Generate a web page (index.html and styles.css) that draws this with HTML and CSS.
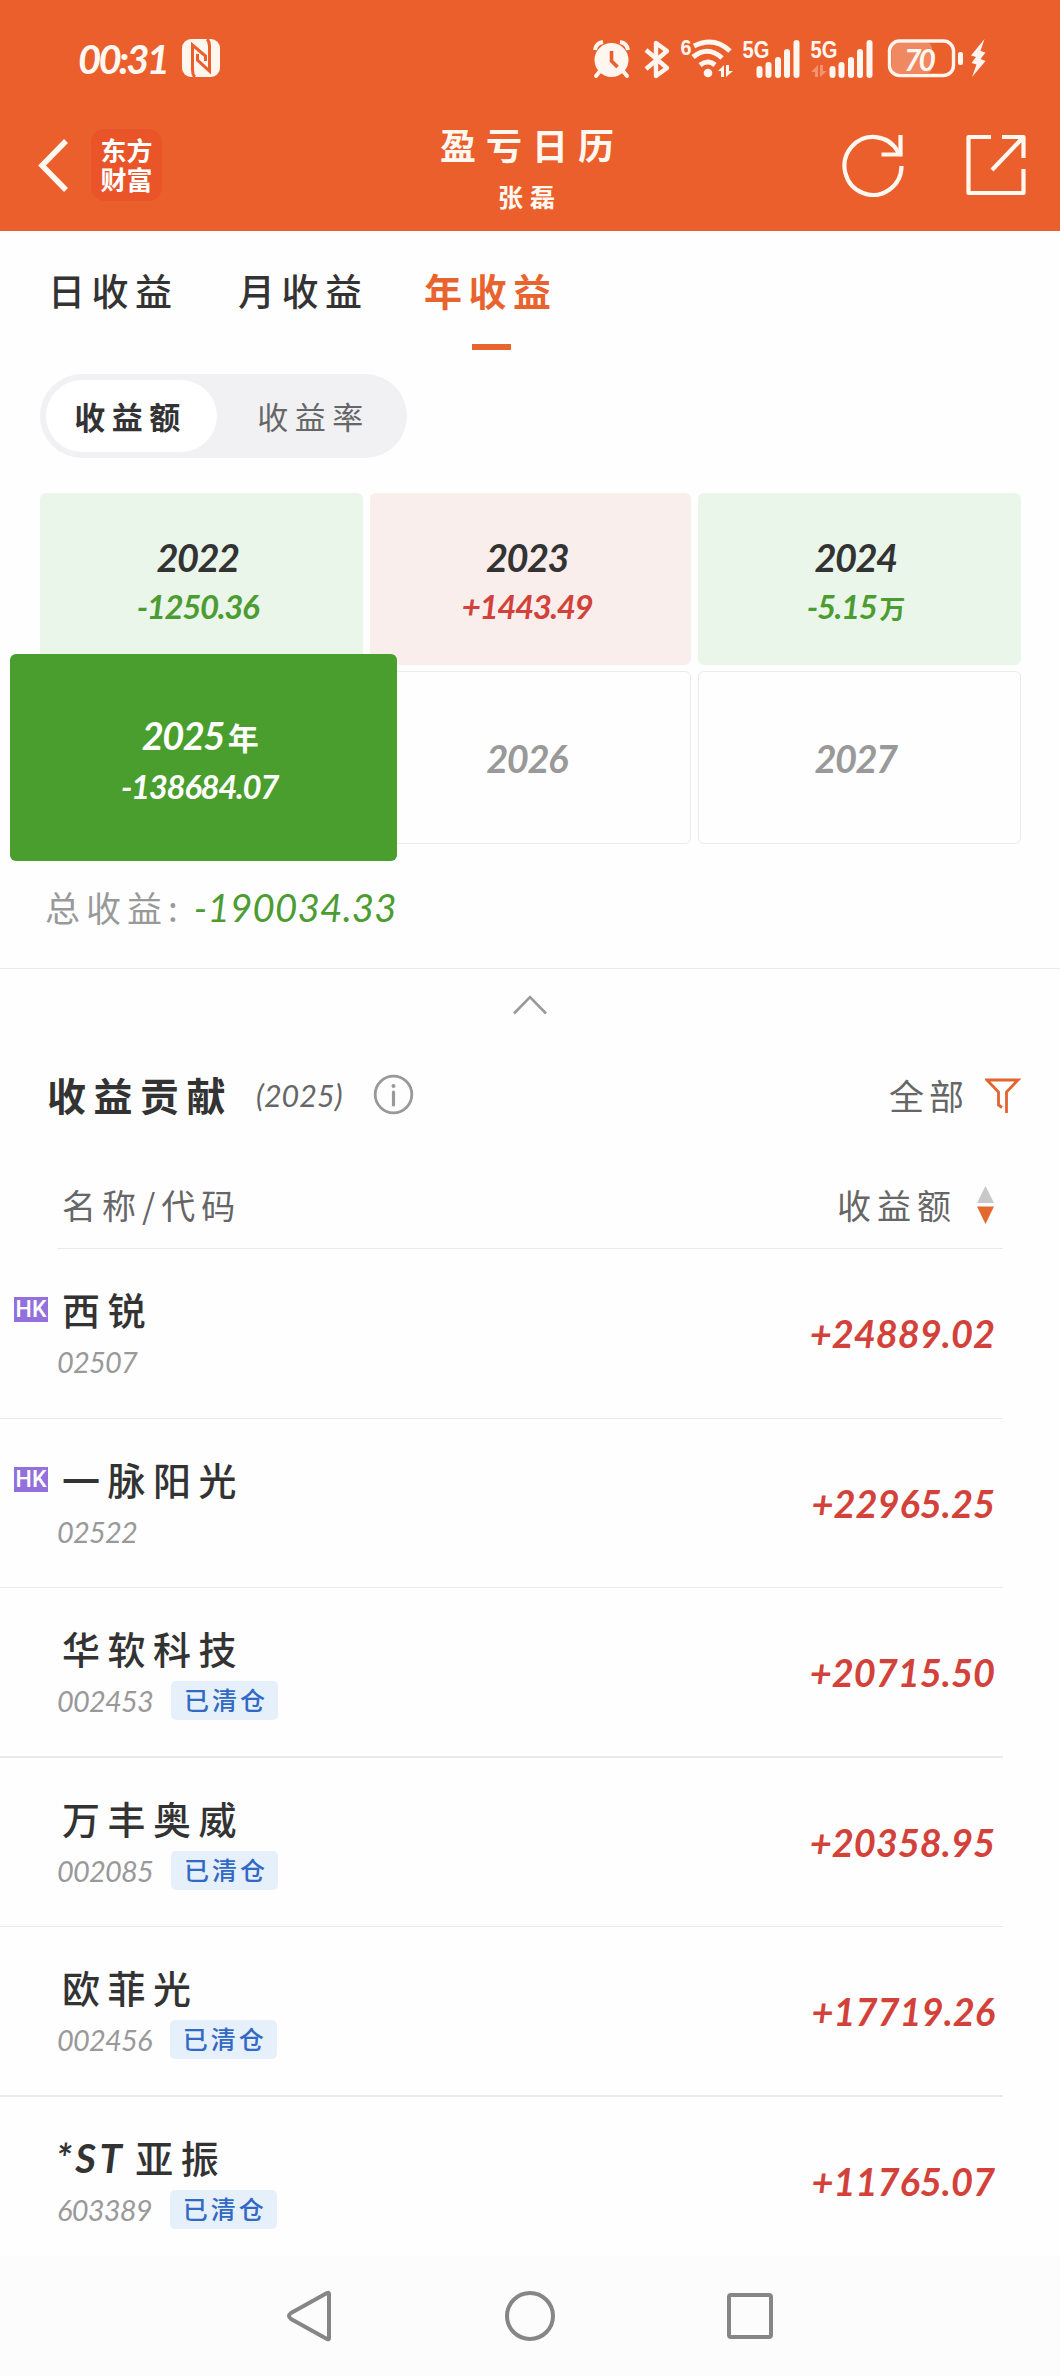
FILE: index.html
```html
<!DOCTYPE html>
<html lang="zh-CN">
<head>
<meta charset="utf-8">
<title>盈亏日历</title>
<link rel="stylesheet" href="styles.css">
</head>
<body>
<header class="top">
  <div class="status">
    <span class="num clock">00:31</span>
    <svg class="nfc" width="38" height="38" viewBox="0 0 38 38"><rect width="38" height="38" rx="9" fill="#fff6f0"/><path d="M13 38Q10.500 36 10.500 31V6L23.500 17V22" fill="none" stroke="#eb5f2d" stroke-width="3"/><path d="M25 0Q27.500 2 27.500 7V32L15.500 21V15" fill="none" stroke="#eb5f2d" stroke-width="3"/></svg>
    <svg class="sys" width="396" height="44" viewBox="592 35 396 44" fill="#fff6f0">
      <circle cx="611.5" cy="59" r="17"/><path d="M595 49q1-7 8-8M628 49q-1-7-8-8" fill="none" stroke="#fff6f0" stroke-width="4"/><path d="M600 70l-4 5M623 70l4 5" stroke="#fff6f0" stroke-width="4" stroke-linecap="round"/><path d="M611.500 50v10l6 6" fill="none" stroke="#eb5f2d" stroke-width="3.600"/>
      <path d="M646 49l21 18-11 8V42l11 8-21 18" fill="none" stroke="#fff6f0" stroke-width="4.400" stroke-linejoin="round"/>
      <text class="tiny" x="680.500" y="54" font-size="22" textLength="11" lengthAdjust="spacingAndGlyphs">6</text>
      <g fill="none" stroke="#fff6f0" stroke-width="5"><path d="M694 45q20-10 36 5"/><path d="M693 56q15-12 29 1"/><path d="M700 64q8-6 15 0"/></g><circle cx="708" cy="72" r="4.300"/>
      <path d="M718 70l6-6v12h-3v-6zM726 64v12l7-6h-4v-6z"/>
      <text class="tiny" x="742.500" y="57" font-size="24.500" textLength="27" lengthAdjust="spacingAndGlyphs">5G</text>
      <g class="bars"><path d="M759.500 68v6M768.500 64v10M778 59v15M787 51v23M796.500 42v32"/><path d="M832.500 68v6M841.500 64v10M851 59v15M860 51v23M869.500 42v32"/></g>
      <text class="tiny" x="810.500" y="57" font-size="24.500" textLength="27" lengthAdjust="spacingAndGlyphs">5G</text>
      <path d="M811 71l7-7v12h-3v-5zM820 64v12l7-6h-4v-6z" opacity=".35"/>
      <rect x="892" y="42" width="40" height="30" rx="5" opacity=".27"/>
      <rect x="889.500" y="40" width="64" height="34.500" rx="10" fill="none" stroke="#fff6f0" stroke-width="3.400"/><rect x="958" y="51" width="5" height="13" rx="2"/>
      <text class="batt" x="904" y="70" textLength="32">70</text>
      <path d="M984.500 38L971 54.500l5 1.500-4.500 6 5 1.500-4.500 12.500L985.500 60l-5-2 5-6.500-5-1.500z"/>
    </svg>
  </div>
  <div class="bar">
    <svg class="back" width="32" height="56" viewBox="0 0 32 56"><path d="M28 3L4 27.500 28 52" fill="none" stroke="#fff8f0" stroke-width="5.500"/></svg>
    <div class="logo">东方<br>财富</div>
    <div class="heading"><h1>盈亏日历</h1><p>张磊</p></div>
    <svg class="refresh" width="64" height="64" viewBox="0 0 64 64" fill="none" stroke="#fff8f0" stroke-width="4.200"><path d="M60.500 33A28.500 29 0 1 1 57 19L60 22"/><path d="M59.500 2v19.500H40.500"/></svg>
    <svg class="share" width="64" height="64" viewBox="0 0 64 64" fill="none" stroke="#fff8f0" stroke-width="4.200" stroke-linejoin="round"><path d="M27 4H4.500V60H59.500V36"/><path d="M38 4H59.500V25M59 4.500L28 37"/></svg>
  </div>
</header>
<main>
  <nav class="tabs"><a>日收益</a><a>月收益</a><a class="on">年收益</a></nav>
  <div class="switch"><span class="picked">收益额</span><span>收益率</span></div>
  <section class="years">
    <div class="cell down"><b class="num">2022</b><i class="num">-1250.36</i></div>
    <div class="cell up"><b class="num">2023</b><i class="num">+1443.49</i></div>
    <div class="cell down"><b class="num">2024</b><i class="num">-5.15<em>万</em></i></div>
    <div class="cell current"><b class="num">2025<em>年</em></b><i class="num">-138684.07</i></div>
    <div class="cell empty"><b class="num">2026</b></div>
    <div class="cell empty"><b class="num">2027</b></div>
  </section>
  <div class="total"><span>总收益:</span><i class="num">-190034.33</i></div>
  <div class="fold"><svg width="36" height="22" viewBox="0 0 36 22"><path d="M2 19.500L18 3 34 19.500" fill="none" stroke="#999" stroke-width="2.600"/></svg></div>
  <div class="section">
    <h2>收益贡献</h2><i class="num period">(2025)</i>
    <svg class="info" width="42" height="42" viewBox="0 0 42 42"><circle cx="20.500" cy="20.500" r="18.300" fill="none" stroke="#999" stroke-width="2.800"/><circle cx="20.500" cy="12" r="2" fill="#999"/><path d="M20.500 18v13" stroke="#999" stroke-width="3.200" stroke-linecap="round"/></svg>
    <span class="filter">全部</span>
    <svg class="funnel" width="36" height="38" viewBox="0 0 36 38"><path d="M17 30.500l-3.500-2.500V15L2 3H33L21.500 15V36" fill="none" stroke="#e2642f" stroke-width="2.800"/></svg>
  </div>
  <div class="columns"><span>名称/代码</span><span class="sum">收益额</span><svg width="17" height="38" viewBox="0 0 17 38"><path d="M8.500 0L17 17H0z" fill="#c8c8c8"/><path d="M0 20.500H17L8.500 38z" fill="#e2682e"/></svg></div>
  <div class="list">
    <div class="row"><span class="hk">HK</span><div class="stock"><strong>西锐</strong><p><i class="num">02507</i></p></div><i class="num gain">+24889.02</i></div>
    <div class="row"><span class="hk">HK</span><div class="stock"><strong>一脉阳光</strong><p><i class="num">02522</i></p></div><i class="num gain">+22965.25</i></div>
    <div class="row thick"><span></span><div class="stock"><strong>华软科技</strong><p><i class="num">002453</i><span class="tag">已清仓</span></p></div><i class="num gain">+20715.50</i></div>
    <div class="row"><span></span><div class="stock"><strong>万丰奥威</strong><p><i class="num">002085</i><span class="tag">已清仓</span></p></div><i class="num gain">+20358.95</i></div>
    <div class="row thick"><span></span><div class="stock"><strong>欧菲光</strong><p><i class="num">002456</i><span class="tag">已清仓</span></p></div><i class="num gain">+17719.26</i></div>
    <div class="row last"><span></span><div class="stock"><strong><i class="num st">*ST</i>亚振</strong><p><i class="num">603389</i><span class="tag">已清仓</span></p></div><i class="num gain">+11765.07</i></div>
  </div>
</main>
<footer class="keys">
  <svg width="490" height="56" viewBox="285 2288 490 56" fill="none" stroke="#868686" stroke-width="4"><path d="M329 2294v44q0 2-2 1l-36-20q-4-3 0-6l36-20q2-1 2 1z" stroke-linejoin="round"/><circle cx="530" cy="2316" r="23"/><rect x="729" y="2295" width="42" height="42" rx="2"/></svg>
</footer>
</body>
</html>
```
FILE: styles.css
```css
* { box-sizing: border-box; }
body { margin: 0; width: 1060px; height: 2376px; overflow: hidden; background: #fefefe; color: #333; font-family: "Noto Sans CJK SC", sans-serif; display: flex; flex-direction: column; }
main { height: 2025px; overflow: hidden; flex: none; }
h1, h2, p { margin: 0; }
svg { display: block; flex: none; }
.num { font-family: Lato, "Noto Sans CJK SC", sans-serif; font-style: italic; }
.num em { font-family: "Noto Sans CJK SC", sans-serif; font-style: normal; }

.top { height: 231px; background: #eb5f2d; color: #fff8f0; flex: none; }
.status { height: 115px; padding: 0 72px 0 78px; display: flex; align-items: center; }
.clock { font-size: 40px; font-weight: 700; letter-spacing: -2.8px; width: 104px; margin-top: 3px; }
.sys { margin-left: auto; }
.tiny { font-family: "Liberation Sans", sans-serif; font-weight: 700; }
.batt { font: italic 700 30px Lato, sans-serif; }
.bars path { fill: none; stroke: #fff6f0; stroke-width: 6; stroke-linecap: round; }
.bar { height: 116px; display: grid; grid-template-columns: 91px 71px 1fr 64px 59px 64px 32px; align-items: start; }
.back { margin: 23px 0 0 38px; }
.logo { height: 72px; margin-top: 14px; border-radius: 14px; background: #e95428; font-size: 26px; line-height: 29px; font-weight: 700; text-align: center; padding-top: 6px; color: #fff; }
.heading { text-align: center; padding-left: 61px; padding-top: 5px; }
.heading h1 { font-size: 36px; line-height: 48px; letter-spacing: 10px; font-weight: 700; }
.heading p { font-size: 25px; line-height: 36px; letter-spacing: 7px; margin: 10px 4px 0 0; font-weight: 700; }
.refresh, .share { margin-top: 18px; }
.share { grid-column: 6; }

.tabs { display: flex; padding-left: 48px; height: 143px; gap: 51px; }
.tabs a { font-size: 37px; letter-spacing: 6.500px; line-height: 54px; padding-top: 32px; height: 119px; font-weight: 500; width: 139px; white-space: nowrap; }
.tabs .on { color: #e9632e; font-weight: 700; display: flex; flex-direction: column; justify-content: space-between; font-size: 38px; }
.tabs .on::after { content: ""; width: 39px; height: 6px; background: #e9632e; margin-left: 48px; }
.tabs a:nth-child(3) { margin-left: -4px; }
.switch { width: 367px; height: 84px; margin-left: 40px; padding: 6px; border-radius: 42px; background: #f1f1f4; display: flex; font-size: 31px; letter-spacing: 6.500px; line-height: 72px; color: #666; }
.switch span { width: 171px; text-align: center; padding-right: 2px; border-radius: 36px; margin-right: 12px; flex: none; }
.switch .picked { background: #fff; color: #333; font-weight: 700; }

.years { margin: 35px 39px 0 40px; display: grid; grid-template-columns: 323px 321px 323px; grid-template-rows: 172px 173px; column-gap: 7px; row-gap: 6px; }
.cell { border-radius: 6px; display: flex; flex-direction: column; align-items: center; padding-top: 39px; padding-right: 8px; }
.cell b { font-size: 38px; line-height: 50px; letter-spacing: -1.5px; font-weight: 700; }
.cell b em { font-size: 31px; margin-left: 4px; }
.cell i { font-size: 33px; line-height: 40px; letter-spacing: -1.4px; font-weight: 700; margin-top: 4px; }
.cell i em { font-size: 26px; margin-left: 3px; }
.down { background: #ebf6eb; } .down i { color: #4c9c32; }
.up { background: #faeeec; padding-right: 7px; } .up i { color: #d3423a; }
.current { background: #499e2e; color: #fff; margin: -17px -34px -17px -30px; padding-top: 56px; position: relative; }
.empty { border: 1px solid #ebebeb; color: #999; }
.empty b { padding-top: 22px; font-weight: 700; }
.total { height: 125px; padding: 42px 0 41px 45px; display: flex; align-items: center; border-bottom: 1px solid #e9e9e9; color: #999; font-size: 35px; letter-spacing: 6px; }
.total i { color: #4c9c32; font-size: 38.500px; letter-spacing: .2px; margin-left: 10px; }
.fold { height: 70px; display: flex; justify-content: center; padding-top: 25px; }
.section { height: 112px; display: flex; align-items: center; padding: 0 39px 0 47px; }
.section h2 { font-size: 39px; letter-spacing: 7.500px; line-height: 50px; font-weight: 700; margin-top: -3px; }
.period { font-size: 30.500px; color: #666; margin-left: 23px; width: 91px; }
.info { margin-left: 26px; margin-top: -1px; }
.filter { margin-left: auto; margin-right: 16px; color: #666; font-size: 35px; letter-spacing: 5px; margin-top: -2px; }
.funnel { margin-top: 1px; }
.columns { margin: 0 57px; height: 98px; padding: 10px 9px 0 5px; display: flex; align-items: center; border-bottom: 1px solid #eaeaea; font-size: 34px; letter-spacing: 6px; color: #666; }
.columns .sum { margin-left: auto; margin-right: 20px; }
.list { width: 1003px; }
.row { height: 169.500px; border-bottom: 1px solid #eaeaea; display: grid; grid-template-columns: 57px 1fr auto; padding-right: 8px; }
.thick { border-bottom-width: 2px; }
.last { border: 0; height: 160px; }
.hk { width: 34px; height: 25px; margin: 48px 0 0 14px; background: #9370db; color: #fff; font: 500 23px/25px Roboto, sans-serif; text-align: center; }
.stock { padding-top: 34px; }
.stock strong { display: block; font-size: 38px; line-height: 52px; letter-spacing: 7.500px; font-weight: 500; padding-left: 5px; white-space: nowrap; }
.stock p { display: flex; align-items: center; height: 39px; margin-top: 7px; }
.stock p i { font-size: 29px; letter-spacing: -.8px; color: #999; }
.stock .st { font-size: 40px; letter-spacing: 3.500px; margin: 0 10px 0 -6px; font-weight: 700; line-height: 40px; }
.tag { margin-left: 18px; width: 107px; height: 39px; border-radius: 5px; background: #e6f0fa; color: #3269c4; font-size: 25px; line-height: 37px; letter-spacing: 3px; text-align: center; padding-left: 3px; font-weight: 500; }
.gain { align-self: start; padding-top: 60px; line-height: 48px; font-size: 38px; font-weight: 700; color: #d3423a; }
.keys { height: 120px; background: #fcfcfc; padding: 32px 0 0 285px; flex: none; }
```
